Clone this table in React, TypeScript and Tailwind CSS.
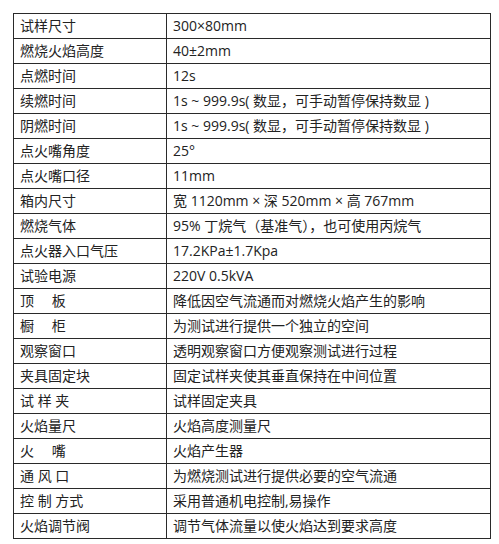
import React from "react";

const rows: [string, string][] = [
  ["试样尺寸", "300×80mm"],
  ["燃烧火焰高度", "40±2mm"],
  ["点燃时间", "12s"],
  ["续燃时间", "1s ~ 999.9s( 数显，可手动暂停保持数显 )"],
  ["阴燃时间", "1s ~ 999.9s( 数显，可手动暂停保持数显 )"],
  ["点火嘴角度", "25°"],
  ["点火嘴口径", "11mm"],
  ["箱内尺寸", "宽 1120mm × 深 520mm × 高 767mm"],
  ["燃烧气体", "95% 丁烷气（基准气），也可使用丙烷气"],
  ["点火器入口气压", "17.2KPa±1.7Kpa"],
  ["试验电源", "220V 0.5kVA"],
  ["顶　 板", "降低因空气流通而对燃烧火焰产生的影响"],
  ["橱　 柜", "为测试进行提供一个独立的空间"],
  ["观察窗口", "透明观察窗口方便观察测试进行过程"],
  ["夹具固定块", "固定试样夹使其垂直保持在中间位置"],
  ["试 样 夹", "试样固定夹具"],
  ["火焰量尺", "火焰高度测量尺"],
  ["火　 嘴", "火焰产生器"],
  ["通 风 口", "为燃烧测试进行提供必要的空气流通"],
  ["控 制 方式", "采用普通机电控制,易操作"],
  ["火焰调节阀", "调节气体流量以使火焰达到要求高度"],
];

const App = () => {
  return (
    <div className="w-[499px] h-[544px] bg-white pt-[13px] pl-[13px]">
      <table
        className="border-collapse w-[478px] text-[14px] text-[#222]"
        style={{ fontFamily: '"Open Sans", "Noto Sans CJK SC", sans-serif' }}
      >
        <tbody>
          {rows.map(([label, value], i) => (
            <tr key={i} className="h-[25px]">
              <td className="w-[153px] border border-[#2a2a2a] px-[6px] py-0 leading-[24px] whitespace-pre">
                {label}
              </td>
              <td className="border border-[#2a2a2a] px-[6px] py-0 leading-[24px] whitespace-pre">
                {value}
              </td>
            </tr>
          ))}
        </tbody>
      </table>
    </div>
  );
};

export default App;
